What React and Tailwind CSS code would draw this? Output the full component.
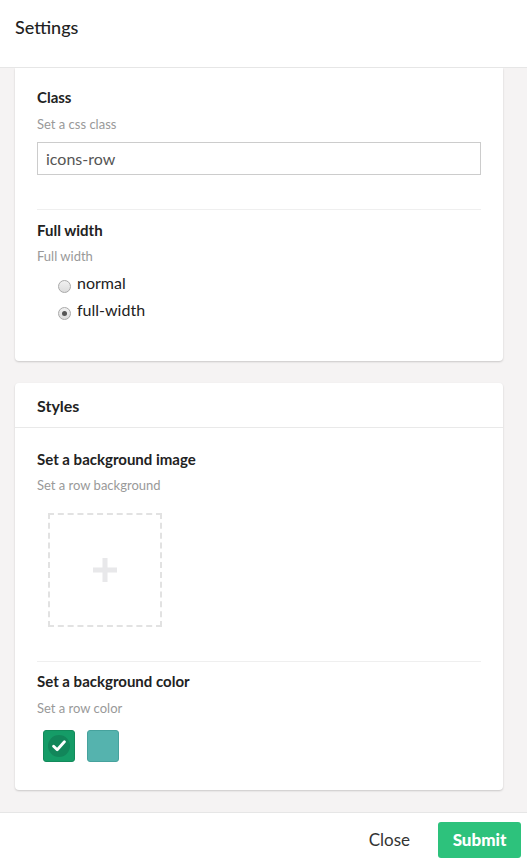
import { useState } from "react"

const Radio = ({ checked, label, onClick }) => (
  <label className="flex items-end h-[20px] cursor-pointer" onClick={onClick}>
    <span className="w-[13px] h-[13px] rounded-full border border-[#a9a9a9] bg-gradient-to-b from-[#f1f1f1] to-[#dcdcdc] flex items-center justify-center">
      {checked && <span className="w-[5px] h-[5px] rounded-full bg-[#555]" />}
    </span>
    <span className="ml-[6px] text-[16px] leading-[20px] text-[#222]">{label}</span>
  </label>
)

const Label = ({ title, hint }) => (
  <div>
    <div className="text-[15px] leading-[18px] font-bold text-[#222]">{title}</div>
    <div className="mt-[10px] text-[13px] leading-[16px] text-[#999]">{hint}</div>
  </div>
)

const App = () => {
  const [width, setWidth] = useState("full-width")
  const [color, setColor] = useState(0)
  const swatches = ["bg-[#159c67] border-[#138a5b]", "bg-[#55b3ae] border-[#46a29d]"]

  return (
    <div className="h-[860px] flex flex-col bg-white font-['Lato',sans-serif]">
      {/* Header */}
      <div className="h-[68px] shrink-0 border-b border-[#e6e6e6] flex items-start px-[15px] pt-[16px]">
        <h1 className="text-[18px] leading-[22px] font-medium text-[#222]">Settings</h1>
      </div>

      {/* Body */}
      <div className="flex-1 bg-[#f5f3f3] overflow-hidden pl-[15px] pr-[24px] flex flex-col gap-[22px]">
        <div className="bg-white rounded-b-[4px] shadow-[0_1px_2px_rgba(0,0,0,0.18)] px-[22px] pt-[20px] pb-[41px]">
          <Label title="Class" hint="Set a css class" />
          <div className="mt-[10px] h-[33px] border border-[#ccc] flex items-center px-[8px] text-[16px] text-[#555]">
            icons-row
          </div>
          <div className="mt-[34px] h-px bg-[#efefef]" />
          <div className="mt-[11px]">
            <div className="text-[15px] leading-[18px] font-bold text-[#222]">Full width</div>
            <div className="mt-[9px] text-[13px] leading-[16px] text-[#999]">Full width</div>
          </div>
          <div className="mt-[9px] ml-[21px] flex flex-col gap-[7px]">
            <Radio label="normal" checked={width === "normal"} onClick={() => setWidth("normal")} />
            <Radio label="full-width" checked={width === "full-width"} onClick={() => setWidth("full-width")} />
          </div>
        </div>

        <div className="bg-white rounded-[4px] shadow-[0_1px_2px_rgba(0,0,0,0.18)]">
          <div className="h-[45px] border-b border-[#e9e9e9] px-[22px] flex items-center">
            <h2 className="text-[16px] leading-[19px] font-bold text-[#222]">Styles</h2>
          </div>
          <div className="px-[22px] pt-[22px] pb-[28px]">
            <div className="text-[15px] leading-[18px] font-bold text-[#222]">Set a background image</div>
            <div className="mt-[9px] text-[13px] leading-[16px] text-[#999]">Set a row background</div>
            <div className="mt-[20px] ml-[11px] w-[114px] h-[114px] border-2 border-dashed border-[#e2e2e2] flex items-center justify-center">
              <svg width="24" height="24" viewBox="0 0 24 24">
                <rect x="9.5" y="0" width="5" height="24" fill="#e8e8ea" />
                <rect x="0" y="9.5" width="24" height="5" fill="#e8e8ea" />
              </svg>
            </div>
            <div className="mt-[34px] h-px bg-[#efefef]" />
            <div className="mt-[10px] text-[15px] leading-[18px] font-bold text-[#222]">Set a background color</div>
            <div className="mt-[10px] text-[13px] leading-[16px] text-[#999]">Set a row color</div>
            <div className="mt-[14px] ml-[6px] flex gap-[12px]">
              {swatches.map((cls, i) => (
                <button
                  key={i}
                  onClick={() => setColor(i)}
                  className={`w-[32px] h-[32px] rounded-[3px] border flex items-center justify-center ${cls}`}
                >
                  {color === i && (
                    <span className="w-[22px] h-[22px] rounded-full bg-[#12865a] flex items-center justify-center">
                      <svg width="14" height="12" viewBox="0 0 14 12">
                        <path d="M1.6 6.2 L5.2 9.8 L12.4 1.8" fill="none" stroke="#fff" strokeWidth="2.8" strokeLinecap="round" strokeLinejoin="round" />
                      </svg>
                    </span>
                  )}
                </button>
              ))}
            </div>
          </div>
        </div>
      </div>

      {/* Footer */}
      <div className="h-[48px] shrink-0 border-t border-[#e6e6e6] flex items-start justify-end pt-[9px] pr-[6px]">
        <button className="mt-[8px] mr-[28px] text-[17px] leading-[20px] text-[#333]">Close</button>
        <button className="h-[36px] w-[83px] rounded-[3px] bg-[#2dc27c] text-white text-[17px] font-black">Submit</button>
      </div>
    </div>
  )
}

export default App
